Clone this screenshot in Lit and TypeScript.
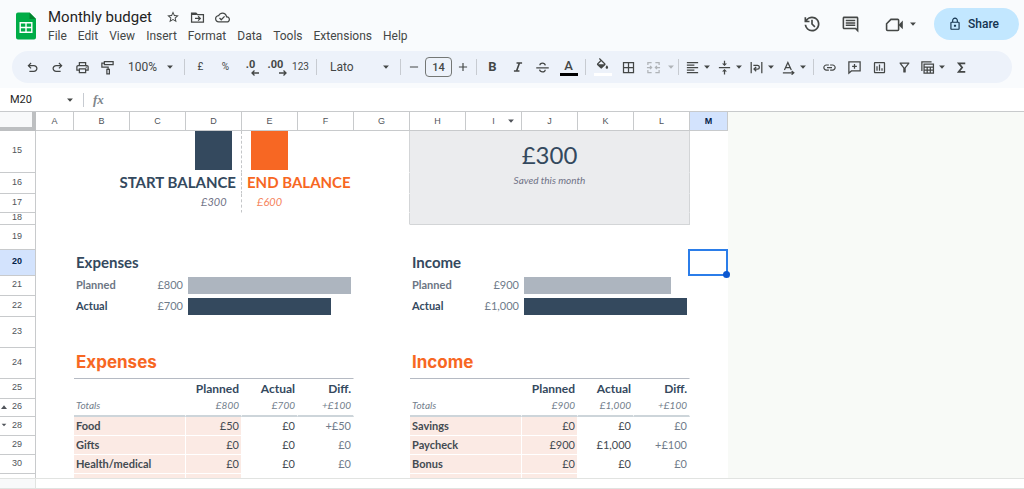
import { LitElement, html, css, svg, nothing, type TemplateResult } from "lit";
import { customElement, property } from "lit/decorators.js";
import { classMap } from "lit/directives/class-map.js";

/* 24-unit icon drawings; "line" drawings use the current colour as stroke. */
const ICONS: Record<string, TemplateResult> = {
  undo: svg`<path d="M7 19v-2h7.1q1.575 0 2.737-1Q18 15 18 13.5T16.838 11Q15.675 10 14.1 10H7.8l2.6 2.6L9 14 4 9l5-5 1.4 1.4L7.8 8h6.3q2.425 0 4.163 1.575Q20 11.15 20 13.5t-1.737 3.925Q16.525 19 14.1 19Z"/>`,
  redo: svg`<path transform="matrix(-1 0 0 1 24 0)" d="M7 19v-2h7.1q1.575 0 2.737-1Q18 15 18 13.5T16.838 11Q15.675 10 14.1 10H7.8l2.6 2.6L9 14 4 9l5-5 1.4 1.4L7.8 8h6.3q2.425 0 4.163 1.575Q20 11.15 20 13.5t-1.737 3.925Q16.525 19 14.1 19Z"/>`,
  print: svg`<path d="M16 8V5H8v3H6V3h12v5ZM18 12.5q.425 0 .713-.288Q19 11.925 19 11.5t-.287-.713Q18.425 10.5 18 10.5t-.712.287Q17 11.075 17 11.5t.288.712q.287.288.712.288ZM16 19v-4H8v4Zm2 2H6v-4H2v-6q0-1.275.875-2.138Q3.75 8 5 8h14q1.275 0 2.138.862Q22 9.725 22 11v6h-4Zm2-6v-4q0-.425-.288-.713Q19.425 10 19 10H5q-.425 0-.713.287Q4 10.575 4 11v4h2v-2h12v2Z"/>`,
  paint: svg`<g class="line"><path d="M7 2.5h14v5H7zM7 5H3v6.500h10V15M11 15h4v7h-4z"/></g>`,
  history: svg`<path d="M12 21q-3.45 0-6.012-2.287Q3.425 16.425 3.05 13H5.1q.35 2.6 2.313 4.3Q9.375 19 12 19q2.925 0 4.963-2.037Q19 14.925 19 12t-2.037-4.963Q14.925 5 12 5q-1.725 0-3.225.8T6.25 8H9v2H3V4h2v2.350q1.275-1.6 3.113-2.475Q9.95 3 12 3q1.875 0 3.513.712 1.637.713 2.850 1.926 1.212 1.212 1.925 2.850Q21 10.125 21 12t-.712 3.513q-.713 1.637-1.925 2.850-1.213 1.212-2.850 1.925Q13.875 21 12 21Zm2.8-4.8L11 12.4V7h2v4.600l3.200 3.200Z"/>`,
  comments: svg`<path d="M21.990 4c0-1.100-.890-2-1.990-2H4c-1.100 0-2 .9-2 2v12c0 1.100.9 2 2 2h14l4 4-.01-18zM20 4v13.170L18.830 16H4V4h16zM6 12h12v2H6zm0-3h12v2H6zm0-3h12v2H6z"/>`,
  video: svg`<g class="line"><path d="M7.500 5.500H16q1.200 0 1.200 1.200v11.600q0 1.200-1.200 1.200H3.200q-1.200 0-1.200-1.200V11z"/></g><path d="M17 12.500L22.500 7v11z"/>`,
  lock: svg`<path d="M6 22q-.825 0-1.412-.587Q4 20.825 4 20V10q0-.825.588-1.413Q5.175 8 6 8h1V6q0-2.075 1.463-3.538Q9.925 1 12 1t3.538 1.462Q17 3.925 17 6v2h1q.825 0 1.413.587Q20 9.175 20 10v10q0 .825-.587 1.413Q18.825 22 18 22Zm0-2h12V10H6v10Zm6-3q.825 0 1.413-.587Q14 15.825 14 15t-.587-1.413Q12.825 13 12 13t-1.412.587Q10 14.175 10 15t.588 1.413Q11.175 17 12 17ZM9 8h6V6q0-1.250-.875-2.125T12 3q-1.250 0-2.125.875T9 6Z"/>`,
  star: svg`<path d="M22 9.240l-7.190-.620L12 2 9.190 8.630 2 9.240l5.460 4.730L5.820 21 12 17.270 18.180 21l-1.630-7.030L22 9.240zM12 15.400l-3.760 2.270 1-4.280-3.320-2.880 4.380-.380L12 6.100l1.710 4.040 4.380.380-3.320 2.880 1 4.280L12 15.400z"/>`,
  move: svg`<g class="line"><path d="M2.500 5h7l2.500 2.500h9.500V19.500h-19zM2.500 7h8M8 13.500h8M13 10l3.500 3.500L13 17"/></g>`,
  cloud: svg`<path d="M19.350 10.040C18.670 6.590 15.640 4 12 4 9.110 4 6.600 5.640 5.350 8.040 2.340 8.360 0 10.910 0 14c0 3.310 2.690 6 6 6h13c2.760 0 5-2.240 5-5 0-2.640-2.050-4.780-4.650-4.960zM19 18H6c-2.210 0-4-1.790-4-4 0-2.050 1.530-3.760 3.560-3.970l1.070-.110.500-.950C8.080 7.140 9.940 6 12 6c2.620 0 4.880 1.860 5.390 4.430l.300 1.500 1.530.110c1.560.100 2.780 1.410 2.780 2.960 0 1.650-1.350 3-3 3zm-9-3.820l-2.090-2.090L6.500 13.500 10 17l6.010-6.010-1.410-1.410z"/>`,
  minus: svg`<g class="line"><path d="M5 12h14"/></g>`,
  plus: svg`<g class="line"><path d="M5 12h14M12 5v14"/></g>`,
  italic: svg`<g class="bold"><path d="M9.500 5.200H19M5 18.800h9.500M14.500 5L9.500 19"/></g>`,
  strike: svg`<g class="line"><path d="M2 12.500h20M16.500 8.500C16 6 14 5 12 5 9.500 5 7.800 6.400 7.800 8.500M16.300 15.500c0 2.200-1.800 3.500-4.300 3.500-2.400 0-4.200-1.200-4.700-3.500"/></g>`,
  fill: svg`<path d="M16.560 8.940L7.620 0 6.210 1.410l2.380 2.380-5.150 5.150c-.590.590-.590 1.540 0 2.120l5.500 5.500c.290.290.680.440 1.060.440s.770-.150 1.060-.440l5.500-5.500c.590-.580.590-1.530 0-2.120zM5.210 10L10 5.210 14.790 10H5.210zM19 11.500s-2 2.170-2 3.500c0 1.100.9 2 2 2s2-.9 2-2c0-1.330-2-3.500-2-3.500z"/>`,
  borders: svg`<path d="M3 3v18h18V3H3zm8 16H5v-6h6v6zm0-8H5V5h6v6zm8 8h-6v-6h6v6zm0-8h-6V5h6v6z"/>`,
  merge: svg`<g class="line"><path d="M9 4H3v4M15 4h6v4M9 20H3v-4M15 20h6v-4M1.500 12H9M6.500 9.500L9 12l-2.500 2.500M22.500 12H15M17.500 9.500L15 12l2.500 2.500"/></g>`,
  left: svg`<g class="line"><path d="M3 4h18M3 8h12M3 12h18M3 16h12M3 20h18"/></g>`,
  middle: svg`<path d="M8 18.500h3V23h2v-4.500h3L12 14.500zM16 5.500h-3V1h-2v4.500H8L12 9.500zM3 11v2h18v-2z"/>`,
  wrap: svg`<g class="line"><path d="M3.500 3v18M20.500 3v18M7 8.500h6.500q3 0 3 3t-3 3H8.500M11.500 11L8 14.500l3.500 3.500"/></g>`,
  rotate: svg`<g class="line"><path d="M5.500 16L11 4l5.500 12M7.500 12h7M3 20.500h16M17 17.500l3.500 3-3.500 3"/></g>`,
  link: svg`<path d="M3.900 12c0-1.710 1.390-3.100 3.100-3.100h4V7H7c-2.760 0-5 2.240-5 5s2.240 5 5 5h4v-1.900H7c-1.710 0-3.100-1.390-3.100-3.100zM8 13h8v-2H8v2zm9-6h-4v1.900h4c1.710 0 3.100 1.390 3.100 3.100s-1.390 3.100-3.100 3.100h-4V17h4c2.760 0 5-2.240 5-5s-2.240-5-5-5z"/>`,
  addComment: svg`<g class="line"><path d="M3 3h18v14.500H7L3 21zM12 6.500v7.500M8.200 10.250h7.600"/></g>`,
  chart: svg`<path d="M9 17H7v-7h2v7zm4 0h-2V7h2v10zm4 0h-2v-4h2v4zm2 2H5V5h14v14zm0-16H5c-1.100 0-2 .9-2 2v14c0 1.100.9 2 2 2h14c1.100 0 2-.9 2-2V5c0-1.100-.9-2-2-2z"/>`,
  filter: svg`<path d="M7 6h10l-5.010 6.300L7 6zm-2.750-.390C6.270 8.200 10 13 10 13v6c0 .550.450 1 1 1h2c.550 0 1-.450 1-1v-6s3.720-4.800 5.740-7.390A.998.998 0 0 0 18.950 4H5.040c-.830 0-1.300.950-.790 1.610z"/>`,
  views: svg`<g class="line"><path d="M3 17.500V3h15.500M6.500 6.500h15v14.500h-15zM6.500 11.500h15M6.500 16h15M11.500 11.500V21M16.500 11.500V21"/></g>`,
  sigma: svg`<g class="bold"><path d="M18 5.200H7.500L13 12l-5.500 6.800H18"/></g>`,
  caret: svg`<path d="M5 8.500h14L12 16z"/>`,
  up: svg`<path d="M3 18h18L12 7z"/>`,
};

@customElement("ui-icon")
export class UiIcon extends LitElement {
  @property() name = "";
  @property({ type: Number }) size = 16;

  static styles = css`
    :host { display: inline-flex; flex: none; pointer-events: none; }
    svg { display: block; fill: currentColor; }
    .line { fill: none; stroke: currentColor; stroke-width: 2; }
    .bold { fill: none; stroke: currentColor; stroke-width: 2.800; }
  `;

  render() {
    return html`<svg viewBox="0 0 24 24" width=${this.size} height=${this.size} aria-hidden="true">${ICONS[this.name]}</svg>`;
  }
}

interface Cell { span?: number; text?: string; kind?: string; bar?: number; tone?: string }
interface Row { n?: number; height: number; cells: Cell[]; mark?: string }

const COLUMNS: [string, number][] = [
  ["A", 38], ["B", 56], ["C", 56], ["D", 56], ["E", 56], ["F", 56], ["G", 56],
  ["H", 56], ["I", 56], ["J", 56], ["K", 56], ["L", 56], ["M", 38],
];

const gap = (span = 1, kind = ""): Cell => ({ span, kind });

const pair = (left: Cell[], right: Cell[]): Cell[] => [gap(), ...left, gap(), ...right, gap()];

const savings = (cells: Cell[], text = "", kind = ""): Cell[] => [
  gap(3), ...cells, gap(), gap(1, "edge"), { span: 5, text, kind: `card ${kind}` }, gap(),
];

const barLine = (label: string, amount: string, share: number, tone: string): Cell[] => [
  { text: label, kind: `label ${tone}` },
  { text: amount, kind: "num soft" },
  { span: 3, bar: share, tone, kind: "chart" },
];

const line = (kind: string, label: string, a: string, b: string, c: string): Cell[] => [
  { span: 2, text: label, kind: `label ${kind}` },
  { text: a, kind: `num ${kind}` },
  { text: b, kind: `num ${kind === "item" ? "plain" : kind}` },
  { text: c, kind: `num ${kind === "item" ? "plain soft" : kind}` },
];

const ROWS: Row[] = [
  { n: 15, height: 42, cells: savings([{ kind: "dash block navy" }, { kind: "block orange" }], "£300", "total") },
  { n: 16, height: 21, cells: [gap(), { span: 3, text: "START BALANCE", kind: "dash balance num" }, { span: 2, text: "END BALANCE", kind: "balance accent" }, gap(1, "edge"), { span: 5, text: "Saved this month", kind: "card note small" }, gap()] },
  { n: 17, height: 19, cells: savings([{ text: "£300", kind: "dash note num inset" }, { text: "£600", kind: "note accent inset" }]) },
  { n: 18, height: 12, cells: savings([gap(), gap()], "", "last") },
  { n: 19, height: 25, cells: [gap(13)] },
  { n: 20, height: 26, cells: pair([{ span: 5, text: "Expenses", kind: "heading" }], [{ span: 5, text: "Income", kind: "heading" }]) },
  { n: 21, height: 20, cells: pair(barLine("Planned", "£800", 1, "planned"), barLine("Planned", "£900", 0.9, "planned")) },
  { n: 22, height: 21, cells: pair(barLine("Actual", "£700", 0.875, "actual"), barLine("Actual", "£1,000", 1, "actual")) },
  { n: 23, height: 31, cells: [gap(13)] },
  { n: 24, height: 31, cells: pair([{ span: 5, text: "Expenses", kind: "title accent" }], [{ span: 5, text: "Income", kind: "title accent" }]) },
  { n: 25, height: 20, cells: pair(line("caption", "", "Planned", "Actual", "Diff."), line("caption", "", "Planned", "Actual", "Diff.")) },
  { n: 26, height: 18, mark: "up", cells: pair(line("totals", "Totals", "£800", "£700", "+£100"), line("totals", "Totals", "£900", "£1,000", "+£100")) },
  { n: 28, height: 19, mark: "caret", cells: pair(line("item", "Food", "£50", "£0", "+£50"), line("item", "Savings", "£0", "£0", "£0")) },
  { n: 29, height: 19, cells: pair(line("item", "Gifts", "£0", "£0", "£0"), line("item", "Paycheck", "£900", "£1,000", "+£100")) },
  { n: 30, height: 19, cells: pair(line("item", "Health/medical", "£0", "£0", "£0"), line("item", "Bonus", "£0", "£0", "£0")) },
  { height: 19, cells: pair(line("item", "", "", "", ""), line("item", "", "", "", "")) },
];

@customElement("budget-sheet")
export class BudgetSheet extends LitElement {
  @property({ type: Number }) activeRow = 20;
  @property() activeColumn = "M";

  static styles = css`
    :host { display: block; overflow: hidden; background: #f8faf7; border-top: 1px solid #c8cacc; color: #34495e; font: 11px/13px Lato, sans-serif; }
    table { width: 100%; table-layout: fixed; border-collapse: separate; border-spacing: 0; }
    th, td { box-sizing: border-box; padding: 0; white-space: nowrap; }
    th { font: 9px/10px "Liberation Sans", Arial, sans-serif; color: #50545a; background: #fff; border-right: 1px solid #c8cacc; border-bottom: 1px solid #c8cacc; text-align: center; }
    thead tr { height: 19px; }
    .corner { background: #f8f9fa; border-right: 4px solid #bdbfc1; border-bottom: 4px solid #bdbfc1; }
    .active { background: #d3e3fd; color: #041e49; font-weight: bold; }
    .beyond, td.beyond { background: transparent; border: 0; }
    .with-menu { display: grid; grid-template-columns: 1fr auto 1fr; align-items: center; }
    .with-menu span { grid-column: 2; }
    .with-menu ui-icon { justify-self: end; margin-right: 5px; }
    .rowhead { display: flex; align-items: center; justify-content: flex-end; padding: 0 13px 2px 0; gap: 4px; line-height: 9px; }
    .rowhead .up { align-self: flex-end; }
    .rowhead .caret { align-self: flex-start; }
    td { background: #fff; border-right: 1px solid #fff; border-bottom: 1px solid #fff; padding: 0 2px 2px; text-align: left; vertical-align: middle; }
    td.chart { padding: 0 2px; }
    td.label { font-weight: bold; }
    td.num { text-align: right; }
    td.planned { color: #6b7583; }
    td.soft { color: #6f7b8a; }
    td.dash { border-right: 1px dashed #c4c6c8; }
    td.edge { border-right-color: #d3d5d7; }
    td.card { background: #ebecee; border-bottom-color: #ebecee; border-right-color: #d3d5d7; text-align: center; }
    td.last { border-bottom-color: #d3d5d7; }
    td.total { font-size: 24px; line-height: 28px; padding-top: 8px; }
    td.note { font-style: italic; color: #6f7286; padding-bottom: 4px; }
    td.small { font-size: 10px; line-height: 12px; padding-bottom: 6px; }
    td.balance { font-size: 15px; line-height: 18px; font-weight: bold; padding: 0 5px 2px; }
    td.inset { padding: 0 15px 4px; }
    td.accent { color: #f76723; }
    td.note.accent { color: #f5835c; }
    td.heading { font-size: 15px; line-height: 18px; font-weight: bold; }
    td.title { font: 700 17px/22px Inter, sans-serif; border-bottom-color: #b5bac3; }
    td.caption { font-size: 12px; line-height: 15px; font-weight: bold; padding-bottom: 0; }
    td.totals { font-size: 10px; line-height: 12px; font-weight: normal; font-style: italic; color: #73808c; padding-bottom: 4px; border-bottom: 2px solid #cdd5da; }
    td.item { background: #fbeae4; color: #434a52; }
    td.plain { color: #434a52; }
    td.plain.soft { color: #6f7b8a; }
    td.block { padding: 0 9px; vertical-align: top; }
    .swatch { height: 39px; background: #34495e; }
    .orange .swatch { background: #f76723; }
    .track { display: flex; }
    .bar { height: 17px; background: #34495e; }
    .bar.planned { background: #adb5bf; }
    td.selected { position: relative; }
    .cursor { position: absolute; inset: -1px -1px -1px -2px; border: 2px solid #2b7de9; }
    .handle { position: absolute; right: -4px; bottom: -4px; width: 7px; height: 7px; border-radius: 50%; background: #0b57d0; }
  `;

  private cell(c: Cell, selected: boolean) {
    const kind = c.kind ?? "";
    const content = c.bar !== undefined
      ? html`<div class="track"><div class="bar ${c.tone}" style="width:${c.bar * 100}%"></div></div>`
      : kind.includes("block")
        ? html`<div class="swatch"></div>`
        : selected
          ? html`<div class="cursor"><div class="handle"></div></div>`
          : c.text ?? nothing;
    return html`<td class="${kind} ${selected ? "selected" : ""}" colspan=${c.span ?? 1}>${content}</td>`;
  }

  render() {
    return html`
      <table aria-label="Monthly budget">
        <colgroup>
          <col style="width:36px">
          ${COLUMNS.map(([, w]) => html`<col style="width:${w}px">`)}
          <col>
        </colgroup>
        <thead>
          <tr>
            <th class="corner"></th>
            ${COLUMNS.map(([name]) => html`
              <th scope="col" class=${classMap({ active: name === this.activeColumn })}>
                ${name === "I" ? html`<div class="with-menu"><span>I</span><ui-icon name="caret" size="10"></ui-icon></div>` : name}
              </th>`)}
            <th class="beyond"></th>
          </tr>
        </thead>
        <tbody>
          ${ROWS.map((row) => html`
            <tr style="height:${row.height}px">
              <th scope="row" class=${classMap({ active: row.n === this.activeRow })}>
                ${row.n ? html`<div class="rowhead">${row.mark ? html`<ui-icon class=${row.mark} name=${row.mark} size="8"></ui-icon>` : nothing}<span>${row.n}</span></div>` : nothing}
              </th>
              ${row.cells.map((c, i) => this.cell(c, row.n === this.activeRow && i === row.cells.length - 1))}
              <td class="beyond"></td>
            </tr>`)}
        </tbody>
      </table>`;
  }
}

@customElement("tool-bar")
export class ToolBar extends LitElement {
  static styles = css`
    :host { display: flex; align-items: center; height: 32px; margin: 0 12px; padding-left: 8px; border-radius: 16px; background: #edf2fa; color: #444746; font: 500 11px/16px Roboto, sans-serif; overflow: hidden; }
    button { display: inline-flex; flex: none; align-items: center; justify-content: center; width: 25px; height: 24px; padding: 0; border: 0; background: none; color: inherit; font: inherit; }
    button.step { width: 20px; }
    button.wide { width: 27px; flex-direction: column; }
    button.menu { width: 32px; gap: 2px; }
    button.drop { width: 9px; }
    button.off { color: #b0b4b8; }
    .sep { flex: none; width: 1px; height: 16px; margin: 0 3px; background: #c7cbd1; }
    .pick { display: grid; flex: none; align-items: center; }
    .pick.zoom { width: 61px; }
    .pick.font { width: 77px; }
    .pick select, .pick ui-icon { grid-area: 1 / 1; }
    .pick ui-icon { justify-self: end; margin-right: 6px; }
    .pick.font select { padding-left: 10px; }
    select { appearance: none; width: 100%; padding: 0 8px; border: 0; background: none; color: inherit; font: 12px/16px Roboto, sans-serif; }
    input { box-sizing: border-box; width: 27px; height: 20px; margin: 0 1px; padding: 0; border: 1px solid #747775; border-radius: 4px; background: none; color: inherit; font: inherit; text-align: center; }
    .bold { font: 700 13px/16px Roboto, sans-serif; }
    .digits { font: 700 11px/10px Roboto, sans-serif; }
    .digits span { display: grid; padding-top: 2px; }
    .digits svg { justify-self: end; margin-right: -4px; }
    .letter { font: 500 13px/14px Roboto, sans-serif; }
    .swatch { width: 18px; height: 3px; background: #000; }
    .swatch.none { background: #fff; }
    .thin { font: 10px/16px Roboto, sans-serif; }
  `;

  private tool(name: string, label: string, size = 15) {
    return html`<button aria-label=${label}><ui-icon name=${name} size=${size}></ui-icon></button>`;
  }

  private menu(name: string, label: string) {
    return html`<button class="menu" aria-label=${label}><ui-icon name=${name} size="15"></ui-icon><ui-icon name="caret" size="10"></ui-icon></button>`;
  }

  render() {
    const sep = html`<span class="sep"></span>`;
    return html`
      ${this.tool("undo", "Undo")}${this.tool("redo", "Redo")}${this.tool("print", "Print")}${this.tool("paint", "Paint format")}
      <span class="pick zoom"><select aria-label="Zoom"><option>100%</option></select><ui-icon name="caret" size="10"></ui-icon></span>
      ${sep}
      <button class="thin" aria-label="Format as currency">£</button>
      <button class="thin" aria-label="Format as percent">%</button>
      <button class="digits" aria-label="Decrease decimal places"><span>.0<svg width="8" height="6" viewBox="0 0 8 6" fill="none" stroke="currentColor" stroke-width="1.300"><path d="M8 3H1M3.500.500L1 3l2.500 2.500"/></svg></span></button>
      <button class="digits" aria-label="Increase decimal places"><span>.00<svg width="8" height="6" viewBox="0 0 8 6" fill="none" stroke="currentColor" stroke-width="1.300"><path d="M0 3h7M4.500.500L7 3 4.500 5.500"/></svg></span></button>
      <button class="thin" aria-label="More formats">123</button>
      ${sep}
      <span class="pick font"><select aria-label="Font"><option>Lato</option></select><ui-icon name="caret" size="10"></ui-icon></span>
      ${sep}
      <button class="step" aria-label="Decrease font size"><ui-icon name="minus" size="14"></ui-icon></button>
      <input aria-label="Font size" value="14">
      <button class="step" aria-label="Increase font size"><ui-icon name="plus" size="14"></ui-icon></button>
      ${sep}
      <button class="bold" aria-label="Bold">B</button>
      ${this.tool("italic", "Italic", 14)}${this.tool("strike", "Strikethrough")}
      <button class="wide" aria-label="Text colour"><span class="letter">A</span><span class="swatch"></span></button>
      ${sep}
      <button class="wide" aria-label="Fill colour"><ui-icon name="fill" size="15"></ui-icon><span class="swatch none"></span></button>
      ${this.tool("borders", "Borders")}
      <button class="off" aria-label="Merge cells" disabled><ui-icon name="merge" size="15"></ui-icon></button>
      <button class="drop off" aria-label="Merge type" disabled><ui-icon name="caret" size="10"></ui-icon></button>
      ${sep}
      ${this.menu("left", "Horizontal align")}${this.menu("middle", "Vertical align")}${this.menu("wrap", "Text wrapping")}${this.menu("rotate", "Text rotation")}
      ${sep}
      ${this.tool("link", "Insert link")}${this.tool("addComment", "Insert comment")}${this.tool("chart", "Insert chart")}${this.tool("filter", "Create a filter")}
      ${this.menu("views", "Filter views")}${this.tool("sigma", "Functions")}
    `;
  }
}

@customElement("app-root")
export class AppRoot extends LitElement {
  static styles = css`
    :host { display: flex; flex-direction: column; height: 100vh; overflow: hidden; background: #f9fbfd; color: #444746; font: 12px/16px Roboto, sans-serif; }
    button, input { padding: 0; border: 0; background: none; color: inherit; font: inherit; }
    header { display: flex; flex: none; align-items: flex-start; height: 51px; box-sizing: border-box; padding: 8px 5px 0 16px; }
    .logo { flex: none; margin: 4px 12px 0 0; }
    .brand { flex: 1; min-width: 0; }
    .name { display: flex; align-items: center; height: 18px; gap: 10px; }
    .name h1 { margin: 0 4px 0 0; color: #1f1f1f; font: 15px/18px Roboto, sans-serif; }
    .name button { display: inline-flex; }
    nav { display: flex; gap: 11px; margin-top: 2px; }
    .actions { display: flex; align-items: center; height: 32px; }
    .actions button { display: inline-flex; align-items: center; justify-content: center; width: 38px; height: 32px; }
    .actions .call { width: 46px; gap: 4px; margin-left: 9px; }
    .actions .share { width: 85px; margin-left: 10px; padding-right: 6px; gap: 6px; border-radius: 16px; background: #c2e7ff; color: #14344f; font-weight: 500; }
    tool-bar { flex: none; }
    .formula { display: flex; flex: none; align-items: center; height: 23px; margin-top: 5px; padding-left: 10px; background: #fff; }
    .formula .ref { width: 55px; font: 11px/16px Roboto, sans-serif; color: #1f1f1f; }
    .formula button { display: inline-flex; }
    .formula .sep { width: 1px; height: 14px; margin: 0 9px 0 8px; background: #c7cbd1; }
    .formula .fx { width: 14px; color: #80868b; font: italic bold 13px/16px "Liberation Serif", serif; }
    .formula .entry { flex: 1; min-width: 0; margin-left: 6px; }
    budget-sheet { flex: 1; min-height: 0; }
    .scroll { display: flex; flex: none; height: 11px; box-sizing: border-box; border-top: 1px solid #e1e3e1; border-bottom: 1px solid #e1e3e1; background: #fff; }
    .scroll span { width: 35px; background: #f8f9fa; border-right: 1px solid #e1e3e1; }
  `;

  render() {
    return html`
      <header>
        <svg class="logo" width="20" height="28" viewBox="0 0 20 28" aria-hidden="true">
          <path d="M2 0.500h11.500L20 7v18.500a2 2 0 0 1-2 2H2a2 2 0 0 1-2-2v-23a2 2 0 0 1 2-2z" fill="#00ac47"/>
          <path d="M13.500.500L20 7h-6.500z" fill="#00832d"/>
          <path d="M4.200 10.700h11.600v9.600H4.200zM4.200 15.500h11.600M10 10.700v9.600" fill="none" stroke="#fff" stroke-width="1.400"/>
        </svg>
        <div class="brand">
          <div class="name">
            <h1>Monthly budget</h1>
            <button aria-label="Star"><ui-icon name="star" size="14"></ui-icon></button>
            <button aria-label="Move"><ui-icon name="move" size="15"></ui-icon></button>
            <button aria-label="Document status"><ui-icon name="cloud" size="15"></ui-icon></button>
          </div>
          <nav aria-label="Menu bar">
            ${["File", "Edit", "View", "Insert", "Format", "Data", "Tools", "Extensions", "Help"].map((m) => html`<button>${m}</button>`)}
          </nav>
        </div>
        <div class="actions">
          <button aria-label="Version history"><ui-icon name="history" size="20"></ui-icon></button>
          <button aria-label="Comments"><ui-icon name="comments" size="19"></ui-icon></button>
          <button class="call" aria-label="Join a call"><ui-icon name="video" size="19"></ui-icon><ui-icon name="caret" size="10"></ui-icon></button>
          <button class="share"><ui-icon name="lock" size="14"></ui-icon>Share</button>
        </div>
      </header>
      <tool-bar role="toolbar" aria-label="Formatting"></tool-bar>
      <div class="formula">
        <input class="ref" aria-label="Cell reference" value="M20">
        <button aria-label="Named ranges"><ui-icon name="caret" size="10"></ui-icon></button>
        <span class="sep"></span>
        <label class="fx" for="entry">fx</label>
        <input class="entry" id="entry">
      </div>
      <budget-sheet></budget-sheet>
      <div class="scroll"><span></span></div>
    `;
  }
}
